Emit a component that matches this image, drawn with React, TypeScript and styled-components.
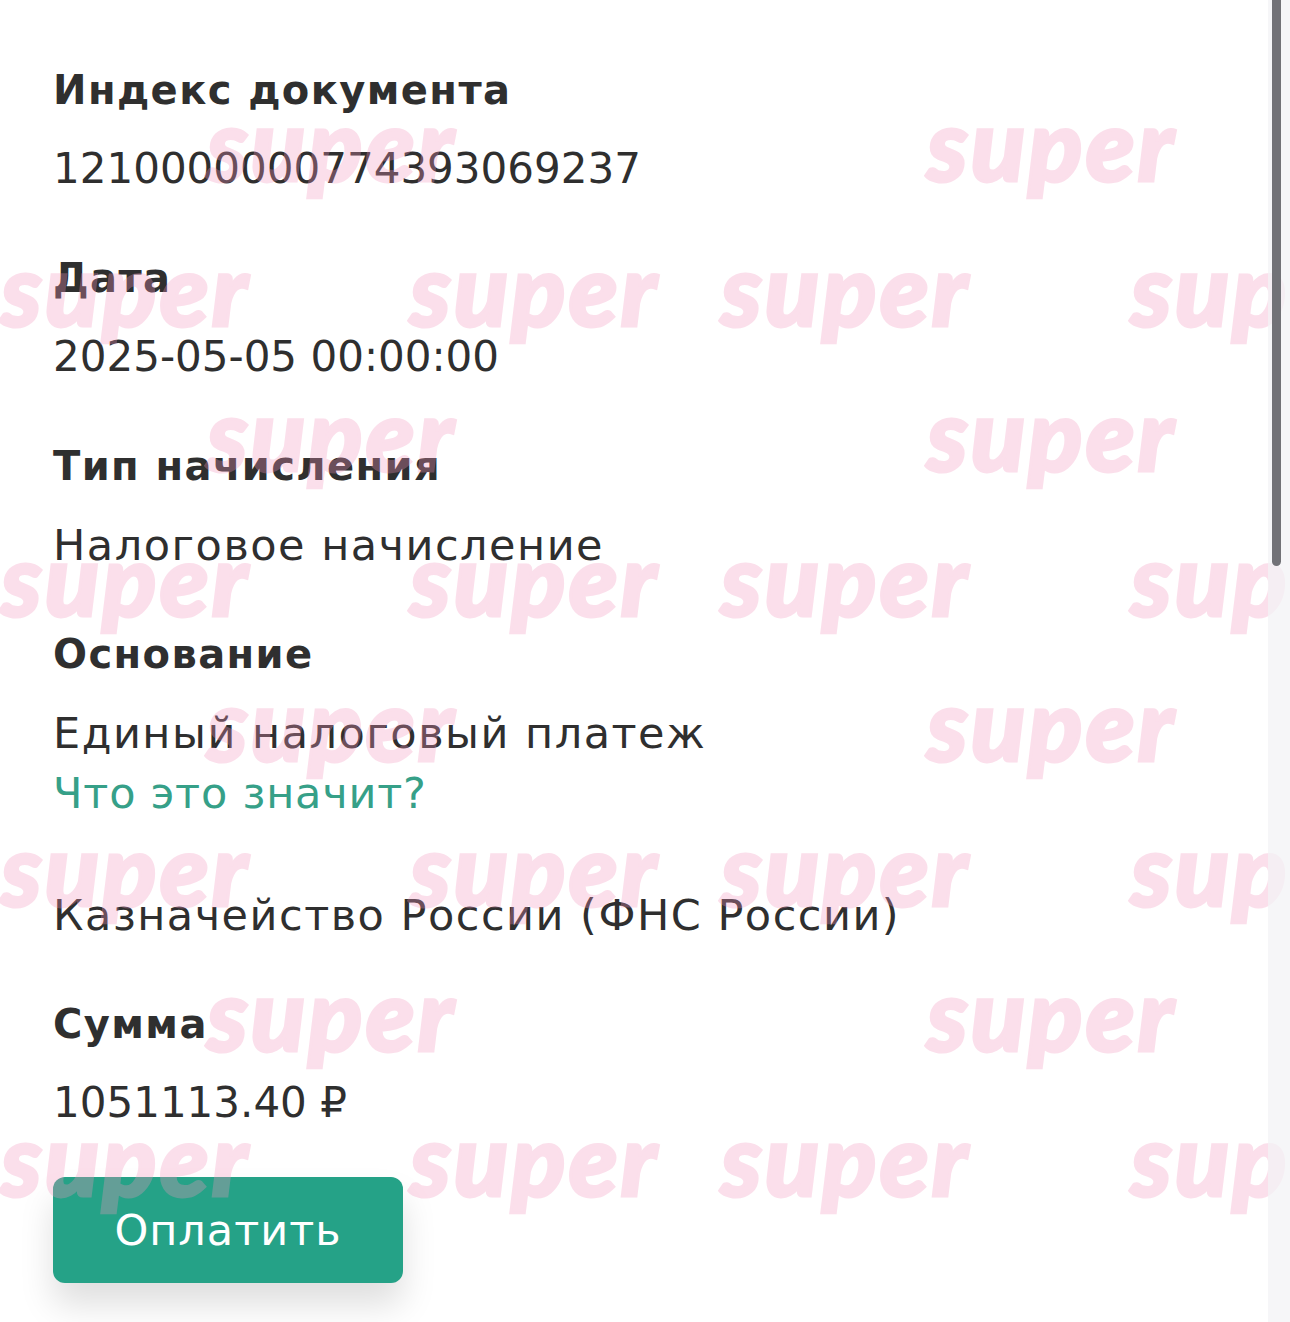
import React from "react";
import styled, { createGlobalStyle } from "styled-components";

const Global = createGlobalStyle`
  html, body {
    margin: 0;
    padding: 0;
    background: #ffffff;
  }
  body {
    font-family: "DejaVu Sans", "Noto Sans", sans-serif;
    color: #303030;
    overflow: hidden;
  }
`;

const Page = styled.div`
  position: relative;
  width: 1290px;
  min-height: 1322px;
  overflow: hidden;
  background: #ffffff;
`;

const Content = styled.main`
  display: flex;
  flex-direction: column;
  align-items: flex-start;
  padding: 65px 0 0 53px;
`;

const Field = styled.section<{ $after?: number }>`
  display: flex;
  flex-direction: column;
  gap: 24px;
  margin-bottom: ${(p) => (p.$after ?? 54)}px;
`;

const Label = styled.h3`
  margin: 0;
  font-size: 40px;
  line-height: 50px;
  font-weight: 700;
  letter-spacing: 1.4px;
  color: #2f2f2f;
`;

const ValueGroup = styled.div`
  display: flex;
  flex-direction: column;
`;

const Value = styled.div<{ $numeric?: boolean }>`
  font-size: ${(p) => (p.$numeric ? 42 : 43)}px;
  line-height: 60px;
  font-weight: 400;
  letter-spacing: ${(p) => (p.$numeric ? 0 : 1.5)}px;
  color: #2f2f2f;
  white-space: nowrap;
`;

const HelpLink = styled.a`
  font-size: 43px;
  line-height: 60px;
  letter-spacing: 0.8px;
  color: #36a088;
  text-decoration: none;
  margin-bottom: 8px;
  cursor: pointer;
`;

const PayButton = styled.button`
  width: 350px;
  height: 106px;
  border: none;
  border-radius: 12px;
  background: #25a287;
  color: #ffffff;
  font-family: "DejaVu Sans", "Noto Sans", sans-serif;
  font-size: 43px;
  letter-spacing: 1px;
  box-shadow: 0 22px 34px rgba(0, 0, 0, 0.13);
  cursor: pointer;
`;

const Watermark = styled.span`
  position: absolute;
  font-family: "Lato", "DejaVu Sans", sans-serif;
  font-weight: 900;
  font-style: italic;
  font-size: 100px;
  line-height: 100px;
  letter-spacing: 3px;
  color: #f596be;
  -webkit-text-stroke: 3px #f596be;
  opacity: 0.3;
  pointer-events: none;
  user-select: none;
  white-space: nowrap;
  z-index: 2;
`;

const ScrollTrack = styled.div`
  position: absolute;
  top: 0;
  right: 0;
  width: 22px;
  height: 100%;
  background: rgba(243, 243, 246, 0.75);
  z-index: 3;
`;

const ScrollThumb = styled.div`
  position: absolute;
  top: -10px;
  left: 4px;
  width: 9px;
  height: 576px;
  border-radius: 5px;
  background: #727277;
`;

const marks: Array<[number, number]> = [];
const rowsA = [130, 420, 710, 1000];
const rowsB = [275, 565, 855, 1145];
rowsA.forEach((y) => {
  [207, 927].forEach((x) => marks.push([x, y - 38]));
});
rowsB.forEach((y) => {
  [1, 410, 721, 1131].forEach((x) => marks.push([x, y - 38]));
});

export default function App() {
  return (
    <>
      <Global />
      <Page>
        <Content>
          <Field>
            <Label>Индекс документа</Label>
            <Value $numeric>1210000000774393069237</Value>
          </Field>
          <Field>
            <Label>Дата</Label>
            <Value $numeric>2025-05-05 00:00:00</Value>
          </Field>
          <Field>
            <Label>Тип начисления</Label>
            <Value>Налоговое начисление</Value>
          </Field>
          <Field>
            <Label>Основание</Label>
            <ValueGroup>
              <Value>Единый налоговый платеж</Value>
              <HelpLink>Что это значит?</HelpLink>
            </ValueGroup>
          </Field>
          <Field>
            <Value>Казначейство России (ФНС России)</Value>
          </Field>
          <Field $after={44}>
            <Label>Сумма</Label>
            <Value $numeric>1051113.40 ₽</Value>
          </Field>
          <PayButton>Оплатить</PayButton>
        </Content>
        {marks.map(([x, y], i) => (
          <Watermark key={i} style={{ left: x, top: y }}>
            super
          </Watermark>
        ))}
        <ScrollTrack>
          <ScrollThumb />
        </ScrollTrack>
      </Page>
    </>
  );
}
